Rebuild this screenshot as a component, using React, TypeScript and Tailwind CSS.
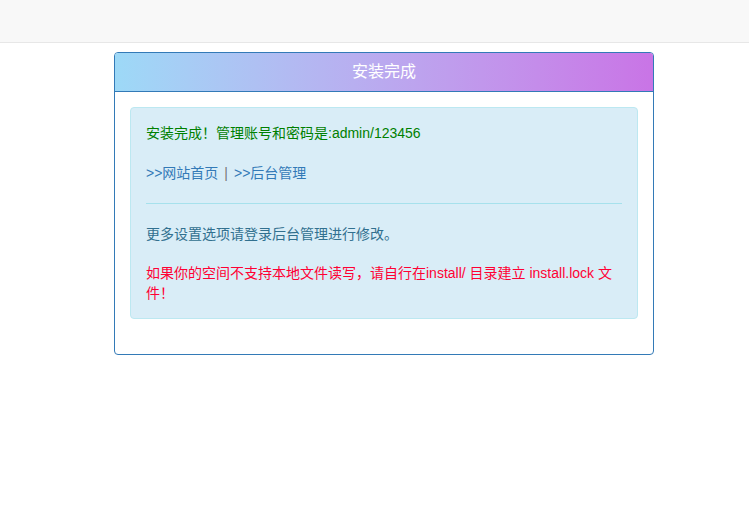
export default function App() {
  const font = { fontFamily: '"Liberation Sans", Arial, "Noto Sans CJK SC", sans-serif' };
  return (
    <div className="min-h-screen bg-white text-[14px] leading-[20px] text-[#333]" style={font}>
      {/* Navbar */}
      <div className="h-[43px] bg-[#f8f8f8] border-b border-[#e7e7e7]" />

      <div className="pt-[9px] pl-[114px]">
        <div className="w-[540px] border border-[#337ab7] rounded-[4px] bg-white">
          {/* Heading */}
          <div className="px-[15px] py-[10px] border-b border-[#337ab7] rounded-t-[3px] bg-gradient-to-r from-[#9dd9f7] to-[#c974e6] text-center">
            <h3 className="text-[16px] leading-[17.6px] text-white">安装完成</h3>
          </div>

          {/* Body */}
          <div className="p-[15px]">
            <div className="mb-[20px] p-[15px] border border-[#bce8f1] rounded-[4px] bg-[#d9edf7] text-[#31708f]">
              <p className="text-[#008000]">安装完成！管理账号和密码是:admin/123456</p>
              <p className="mt-[20px]">
                <a className="text-[#337ab7]">&gt;&gt;网站首页</a>
                <span className="mx-[6px] text-[#777]">|</span>
                <a className="text-[#337ab7]">&gt;&gt;后台管理</a>
              </p>
              <hr className="my-[20px] border-t border-[#a6e1ec]" />
              <p>更多设置选项请登录后台管理进行修改。</p>
              <p className="mt-[19px] text-[#ff0033]">
                如果你的空间不支持本地文件读写，请自行在install/ 目录建立 install.lock 文件！
              </p>
            </div>
          </div>
        </div>
      </div>
    </div>
  );
}
